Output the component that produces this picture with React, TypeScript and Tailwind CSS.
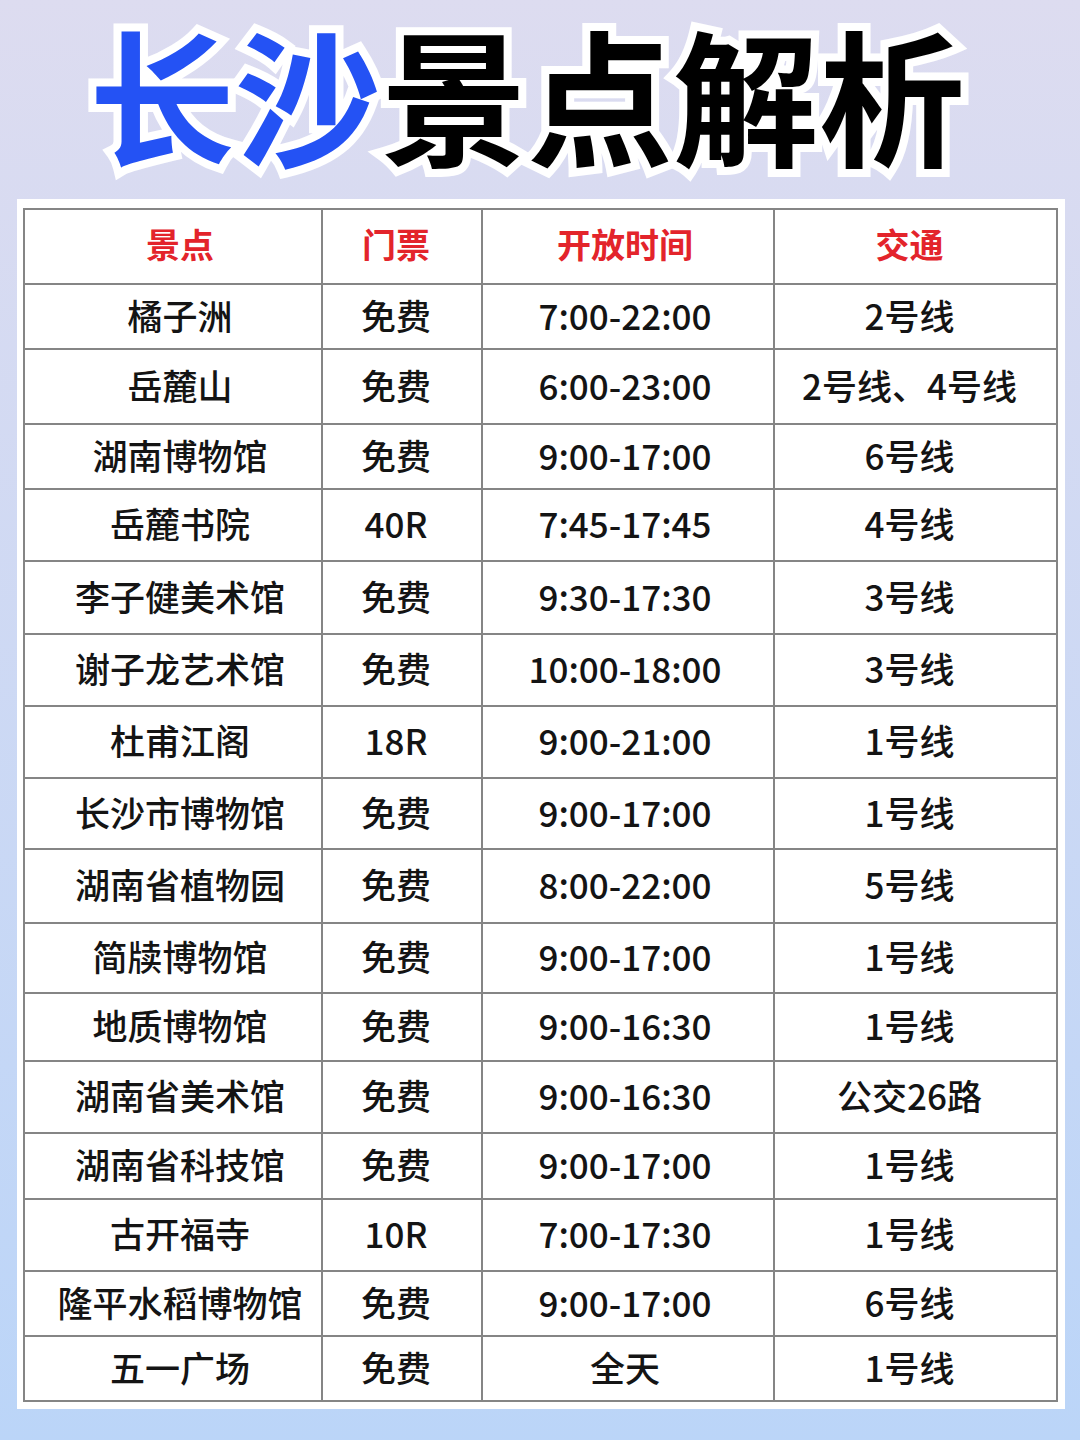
const rows = [
  { name: "橘子洲", ticket: "免费", hours: "7:00-22:00", transit: "2号线", h: "h-[65px]" },
  { name: "岳麓山", ticket: "免费", hours: "6:00-23:00", transit: "2号线、4号线", h: "h-[75px]" },
  { name: "湖南博物馆", ticket: "免费", hours: "9:00-17:00", transit: "6号线", h: "h-[65px]" },
  { name: "岳麓书院", ticket: "40R", hours: "7:45-17:45", transit: "4号线", h: "h-[72px]" },
  { name: "李子健美术馆", ticket: "免费", hours: "9:30-17:30", transit: "3号线", h: "h-[73px]" },
  { name: "谢子龙艺术馆", ticket: "免费", hours: "10:00-18:00", transit: "3号线", h: "h-[72px]" },
  { name: "杜甫江阁", ticket: "18R", hours: "9:00-21:00", transit: "1号线", h: "h-[72px]" },
  { name: "长沙市博物馆", ticket: "免费", hours: "9:00-17:00", transit: "1号线", h: "h-[71px]" },
  { name: "湖南省植物园", ticket: "免费", hours: "8:00-22:00", transit: "5号线", h: "h-[74px]" },
  { name: "简牍博物馆", ticket: "免费", hours: "9:00-17:00", transit: "1号线", h: "h-[70px]" },
  { name: "地质博物馆", ticket: "免费", hours: "9:00-16:30", transit: "1号线", h: "h-[68px]" },
  { name: "湖南省美术馆", ticket: "免费", hours: "9:00-16:30", transit: "公交26路", h: "h-[72px]" },
  { name: "湖南省科技馆", ticket: "免费", hours: "9:00-17:00", transit: "1号线", h: "h-[66px]" },
  { name: "古开福寺", ticket: "10R", hours: "7:00-17:30", transit: "1号线", h: "h-[72px]" },
  { name: "隆平水稻博物馆", ticket: "免费", hours: "9:00-17:00", transit: "6号线", h: "h-[65px]" },
  { name: "五一广场", ticket: "免费", hours: "全天", transit: "1号线", h: "h-[63px]" },
]

// column widths include the right-hand grid line
const c1 = "w-[298px] border-r-2 border-[#858585] pl-[14px]"
const c2 = "w-[160px] border-r-2 border-[#858585] pr-[12px]"
const c3 = "w-[292px] border-r-2 border-[#858585] pr-[6px]"
const c4 = "w-[281px] pr-[12px]"

function Row({ cells, h, last, header }: { cells: string[]; h: string; last?: boolean; header?: boolean }) {
  const cls = [c1, c2, c3, c4]
  return (
    <div className={`flex ${h} ${last ? "" : "border-b-2 border-[#858585]"}`}>
      {cells.map((text, i) => (
        <div
          key={i}
          className={`${cls[i]} flex items-center justify-center whitespace-nowrap pb-[5px] leading-none ${
            header ? "text-[34px] font-bold text-[#e3242b]" : "text-[35px] font-medium text-[#141414]"
          }`}
        >
          {text}
        </div>
      ))}
    </div>
  )
}

export default function App() {
  return (
    <div className="min-h-[1440px] w-[1080px] bg-gradient-to-b from-[#dddcf0] to-[#bbd5f8] font-['Noto_Sans_CJK_SC','Noto_Sans',sans-serif]">
      <div className="flex h-[199px] justify-center pr-[26px] pt-[4px]">
        <h1 className="text-[146px] font-bold leading-[1.2] whitespace-nowrap [-webkit-text-stroke:16px_white] [paint-order:stroke_fill]">
          <span className="text-[#2452f4]">长沙</span>
          <span className="text-black">景点解析</span>
        </h1>
      </div>

      <div className="ml-[17px] w-[1048px] bg-white pb-[7px] pl-[6px] pr-[7px] pt-[9px]">
        <div className="w-[1035px] border-2 border-[#858585]">
          <Row header h="h-[75px]" cells={["景点", "门票", "开放时间", "交通"]} />
          {rows.map((r, i) => (
            <Row
              key={r.name}
              h={r.h}
              last={i === rows.length - 1}
              cells={[r.name, r.ticket, r.hours, r.transit]}
            />
          ))}
        </div>
      </div>
    </div>
  )
}
